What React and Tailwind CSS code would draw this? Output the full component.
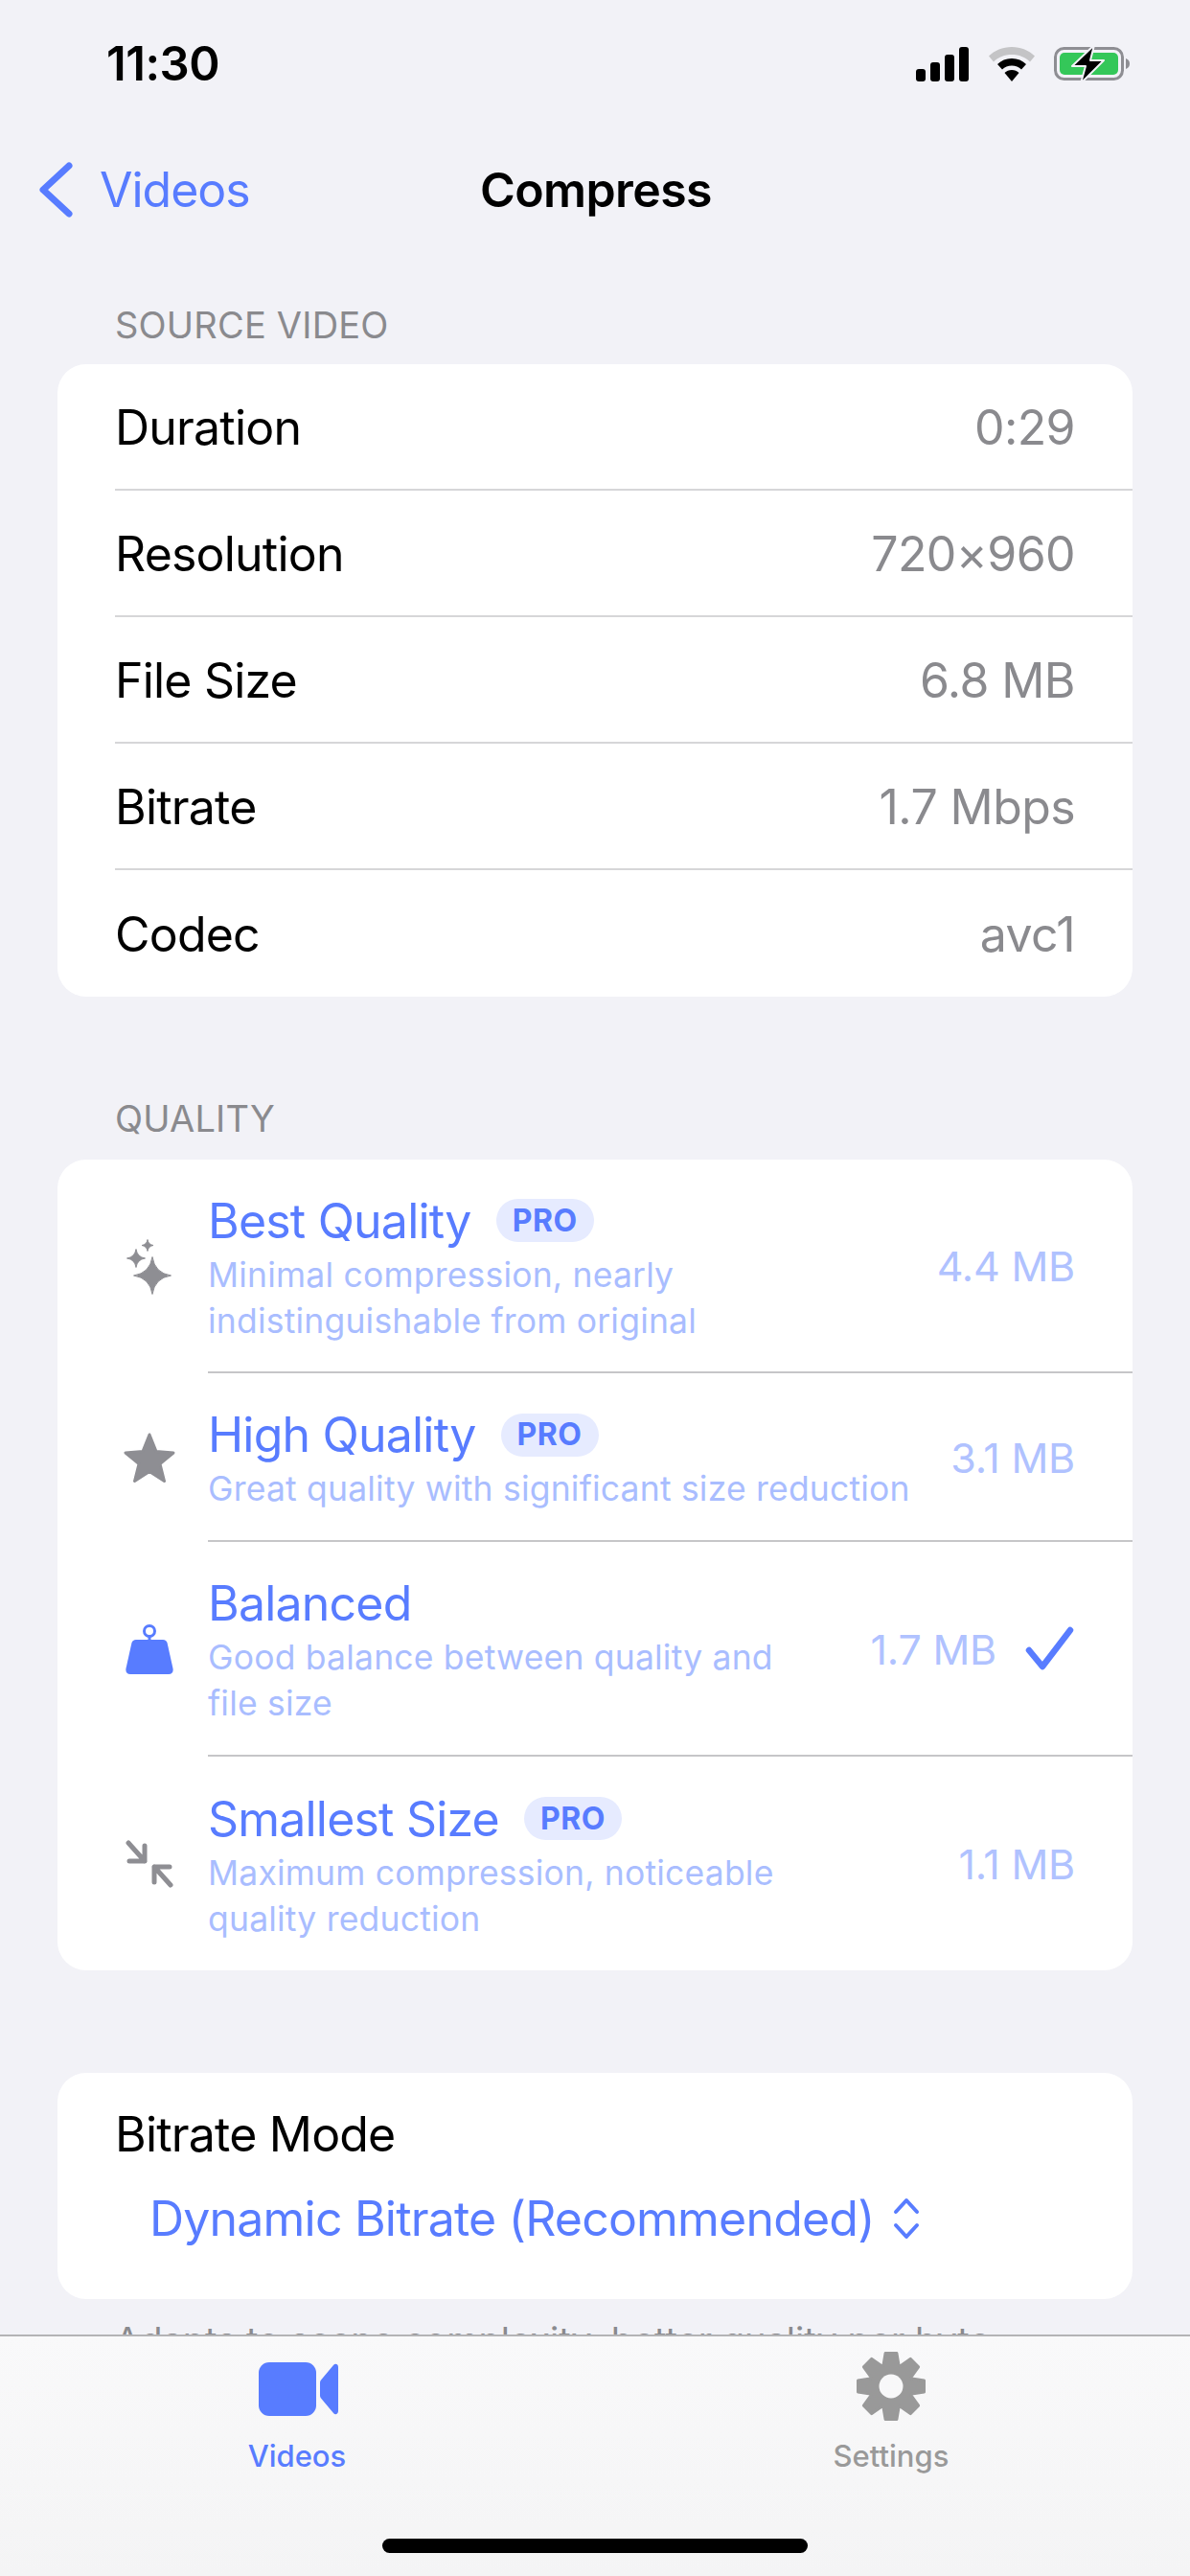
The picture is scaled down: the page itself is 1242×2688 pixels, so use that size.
import React from "react";

const sourceRows = [
  { label: "Duration", value: "0:29" },
  { label: "Resolution", value: "720×960" },
  { label: "File Size", value: "6.8 MB" },
  { label: "Bitrate", value: "1.7 Mbps" },
  { label: "Codec", value: "avc1" },
];

// four pointed star, sides pulled in towards the centre
function sparklePath(cx, cy, r) {
  const k = r * 0.13;
  return `M${cx} ${cy - r}Q${cx + k} ${cy - k} ${cx + r} ${cy}Q${cx + k} ${cy + k} ${cx} ${cy + r}Q${cx - k} ${cy + k} ${cx - r} ${cy}Q${cx - k} ${cy - k} ${cx} ${cy - r}Z`;
}

function SparklesIcon() {
  return (
    <svg width="48" height="58" viewBox="0 0 48 58" fill="#8e8e93" stroke="#8e8e93" strokeWidth="1" strokeLinejoin="round">
      <path d={sparklePath(27, 38, 19.5)} />
      <path d={sparklePath(10, 20, 9.5)} />
      <path d={sparklePath(22, 6.5, 6)} />
    </svg>
  );
}

function StarIcon() {
  return (
    <svg width="56" height="54" viewBox="0 0 56 54" fill="#8e8e93">
      <path
        d="M28 3l7 17.500 18 1.500-14 11.500 4.500 18L28 41.500 12.500 51.500 17 33.500 3 22l18-1.500z"
        stroke="#8e8e93"
        strokeWidth="3"
        strokeLinejoin="round"
      />
    </svg>
  );
}

function WeightIcon() {
  return (
    <svg width="50" height="53" viewBox="0 0 50 53" fill="#587cff">
      <circle cx="25" cy="7" r="5.500" fill="none" stroke="#587cff" strokeWidth="3" />
      <rect x="23.500" y="12" width="3" height="6" />
      <path d="M11 16h28c2.500 0 4 1.200 4.600 3.500L49.500 46c.6 3.500-1 6-4.500 6H5c-3.500 0-5.100-2.500-4.500-6L6.400 19.500C7 17.200 8.500 16 11 16z" />
    </svg>
  );
}

function CompressIcon() {
  return (
    <svg
      width="50"
      height="50"
      viewBox="0 0 50 50"
      fill="none"
      stroke="#8e8e93"
      strokeWidth="5"
      strokeLinecap="round"
      strokeLinejoin="round"
    >
      <path d="M3 3l17 19M20 6v16H4" />
      <path d="M47 47L30 28M30 44V28h16" />
    </svg>
  );
}

function SignalIcon() {
  return (
    <svg width="56" height="36" viewBox="0 0 56 36" fill="#000">
      <rect x="0" y="23" width="10" height="13" rx="3" />
      <rect x="15" y="16" width="10" height="20" rx="3" />
      <rect x="30" y="8" width="10" height="28" rx="3" />
      <rect x="45" y="0" width="10" height="36" rx="3" />
    </svg>
  );
}

function WifiIcon() {
  return (
    <svg width="48" height="36" viewBox="0 0 48 36">
      <path d="M24 0c9.500 0 18 3.700 24 9.500l-5 6C38 10.500 31.500 8 24 8S10 10.500 5 15.500l-5-6C6 3.700 14.500 0 24 0z" fill="#c4c4c6" />
      <path d="M24 12c6 0 11 2.200 15 6l-5 5.500c-2.700-2.500-6-4-10-4s-7.300 1.500-10 4L9 18c4-3.800 9-6 15-6z" fill="#000" />
      <path d="M24 24c3 0 5.500 1 7.500 3L24 36l-7.500-9c2-2 4.500-3 7.500-3z" fill="#000" />
    </svg>
  );
}

function BatteryIcon() {
  return (
    <svg width="80" height="40" viewBox="0 0 80 40">
      <rect x="1.500" y="3.500" width="70" height="32" rx="9" fill="none" stroke="#8e8e93" strokeWidth="3" />
      <rect x="6" y="8" width="61" height="23" rx="5" fill="#34c759" />
      <path d="M75 14c3 1 4 3 4 5.500s-1 4.500-4 5.500z" fill="#8e8e93" />
      <path d="M42 0L19 22h14l-5 18 24-24H38z" fill="#000" stroke="#f2f2f7" strokeWidth="2" strokeLinejoin="round" />
    </svg>
  );
}

function VideoIcon() {
  return (
    <svg width="84" height="56" viewBox="0 0 84 56" fill="#587cff">
      <rect x="0" y="0" width="60" height="56" rx="11" />
      <path d="M65 18.500L78 3c2-2.300 5-1 5 2v46c0 3-3 4.300-5 2L65 37.500c-.6-.7-1-1.500-1-2.500V21c0-1 .4-1.800 1-2.500z" />
    </svg>
  );
}

// gear outline worked out from the tooth count, saves typing the points by hand
function gearPoints() {
  const points = [];
  for (let i = 0; i < 8; i++) {
    const mid = (i * Math.PI * 2) / 8 - Math.PI / 2;
    [
      [-0.36, 23],
      [-0.17, 35],
      [0.17, 35],
      [0.36, 23],
    ].forEach(([offset, radius]) => {
      points.push(
        `${(37 + radius * Math.cos(mid + offset)).toFixed(1)},${(37 + radius * Math.sin(mid + offset)).toFixed(1)}`
      );
    });
  }
  return points.join(" ");
}

function GearIcon() {
  return (
    <svg width="74" height="74" viewBox="0 0 74 74">
      <polygon points={gearPoints()} fill="#999999" stroke="#999999" strokeWidth="3" strokeLinejoin="round" />
      <circle cx="37" cy="37" r="12.500" fill="#f8f8f9" />
    </svg>
  );
}

function QualityRow({ icon, title, pro, lines, size, selected, height, last }) {
  return (
    <div className={`flex ${height}`}>
      <div className="w-[157px] shrink-0 flex items-center justify-center pl-[35px]">{icon}</div>
      <div className={`flex-1 min-w-0 flex items-center pr-[60px] ${last ? "" : "border-b-2 border-[#c6c6c8]"}`}>
        <div className="flex-1 min-w-0 pt-[2px]">
          <div className="flex items-center gap-[26px]">
            <span className="text-[50px] leading-[66px] tracking-[-0.8px] text-[#587cff]">{title}</span>
            {pro && (
              <span className="h-[45px] w-[102px] flex items-center justify-center rounded-full bg-[#e6ebff] text-[32px] font-bold tracking-[0.5px] text-[#587cff]">
                PRO
              </span>
            )}
          </div>
          {lines.map((line) => (
            <div key={line} className="text-[35.500px] leading-[48px] tracking-[0.2px] whitespace-nowrap text-[#a9bdff]">
              {line}
            </div>
          ))}
        </div>
        <span className="pt-[2px] text-[43px] text-[#b0c2ff] tracking-[-0.2px] whitespace-nowrap">{size}</span>
        {selected && (
          <svg className="ml-[30px]" width="52" height="46" viewBox="0 0 52 46" fill="none" stroke="#587cff" strokeWidth="6.500" strokeLinecap="round" strokeLinejoin="round">
            <path d="M4 25l14 17L47 4" />
          </svg>
        )}
      </div>
    </div>
  );
}

export default function App() {
  return (
    <div className="w-[1242px] h-[2688px] flex flex-col overflow-hidden bg-[#f2f2f7] font-['Inter',sans-serif]">
      {/* status bar */}
      <div className="h-[134px] shrink-0 flex items-center justify-between pl-[111px] pr-[62px]">
        <span className="text-[49px] font-semibold tracking-[-0.5px] text-black">11:30</span>
        <div className="flex items-center gap-[20px]">
          <SignalIcon />
          <WifiIcon />
          <BatteryIcon />
        </div>
      </div>

      {/* nav bar */}
      <div className="relative h-[128px] shrink-0 flex items-center pl-[40px]">
        <svg width="36" height="58" viewBox="0 0 36 58" fill="none" stroke="#587cff" strokeWidth="7" strokeLinecap="round" strokeLinejoin="round">
          <path d="M32 4L5 29l27 25" />
        </svg>
        <span className="ml-[28px] text-[50px] tracking-[-1px] text-[#587cff]">Videos</span>
        <span className="absolute left-[2px] right-0 text-center text-[50px] font-semibold tracking-[-0.6px] text-black">Compress</span>
      </div>

      <div className="flex-1 min-h-0 overflow-hidden px-[60px]">
        <div className="mt-[54px] pl-[60px] text-[38px] leading-[46px] tracking-[0.2px] text-[#8a8a8e]">SOURCE VIDEO</div>
        <div className="mt-[18px] rounded-[30px] bg-white">
          {sourceRows.map((row, i) => (
            <div key={row.label} className="h-[132px] pl-[60px]">
              <div className={`h-full flex items-center justify-between pr-[60px] pt-[2px] ${i < sourceRows.length - 1 ? "border-b-2 border-[#d6d6d8]" : ""}`}>
                <span className="text-[50px] tracking-[-0.8px] text-black">{row.label}</span>
                <span className="text-[50px] tracking-[-0.6px] text-[#8a8a8e]">{row.value}</span>
              </div>
            </div>
          ))}
        </div>

        <div className="mt-[104px] pl-[60px] text-[38px] leading-[46px] tracking-[0.2px] text-[#8a8a8e]">QUALITY</div>
        <div className="mt-[20px] rounded-[30px] bg-white">
          <QualityRow
            icon={<SparklesIcon />}
            title="Best Quality"
            pro
            lines={["Minimal compression, nearly", "indistinguishable from original"]}
            size="4.4 MB"
            height="h-[223px]"
          />
          <QualityRow
            icon={<StarIcon />}
            title="High Quality"
            pro
            lines={["Great quality with significant size reduction"]}
            size="3.1 MB"
            height="h-[176px]"
          />
          <QualityRow
            icon={<WeightIcon />}
            title="Balanced"
            lines={["Good balance between quality and", "file size"]}
            size="1.7 MB"
            selected
            height="h-[224px]"
          />
          <QualityRow
            icon={<CompressIcon />}
            title="Smallest Size"
            pro
            lines={["Maximum compression, noticeable", "quality reduction"]}
            size="1.1 MB"
            height="h-[223px]"
            last
          />
        </div>

        <div className="mt-[107px] h-[236px] rounded-[30px] bg-white pl-[60px] pt-[34px]">
          <div className="text-[50px] leading-[60px] tracking-[-0.8px] text-black">Bitrate Mode</div>
          <div className="mt-[28px] ml-[36px] flex items-center gap-[18px]">
            <span className="text-[50px] leading-[60px] tracking-[-0.8px] text-[#587cff]">Dynamic Bitrate (Recommended)</span>
            <svg width="30" height="44" viewBox="0 0 30 44" fill="none" stroke="#587cff" strokeWidth="4" strokeLinecap="round" strokeLinejoin="round">
              <path d="M4 15L15 3l11 12" />
              <path d="M4 29l11 12 11-12" />
            </svg>
          </div>
        </div>

        <div className="mt-[20px] pl-[60px] text-[38px] leading-[46px] text-[#8a8a8e] whitespace-nowrap">
          Adapts to scene complexity, better quality per byte
        </div>
      </div>

      {/* tab bar */}
      <div className="relative h-[252px] shrink-0 border-t-2 border-[#b4b4b6] bg-linear-to-b from-[#f9f9fa] to-[#f4f4f5] flex">
        <div className="w-[620px] flex flex-col items-center pt-[18px]">
          <div className="h-[74px] flex items-center pl-[4px]">
            <VideoIcon />
          </div>
          <span className="mt-[10px] text-[31px] font-medium text-[#587cff]">Videos</span>
        </div>
        <div className="w-[620px] flex flex-col items-center pt-[12px]">
          <div className="h-[80px] flex items-center">
            <GearIcon />
          </div>
          <span className="mt-[10px] text-[31px] font-medium text-[#999999]">Settings</span>
        </div>
        <div className="absolute left-[399px] bottom-[24px] h-[15px] w-[444px] rounded-full bg-black"></div>
      </div>
    </div>
  );
}
